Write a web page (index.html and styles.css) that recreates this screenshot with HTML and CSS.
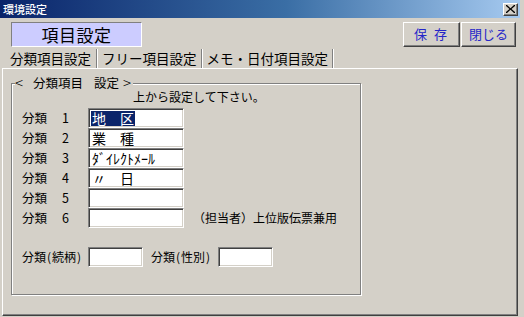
FILE: index.html
```html
<!DOCTYPE html>
<html lang="ja">
<head>
<meta charset="utf-8">
<link rel="stylesheet" href="styles.css">
</head>
<body>
<div class="window">
  <div class="titlebar">
    <span class="title">環境設定</span>
    <span class="close"><svg width="9" height="8" viewBox="0 0 9 8"><path d="M1 0 L4.5 3.2 L8 0 L9 0 L9 1 L5.5 4 L9 7 L9 8 L8 8 L4.5 4.8 L1 8 L0 8 L0 7 L3.5 4 L0 1 L0 0 Z" fill="#000"/></svg></span>
  </div>
  <div class="header">
    <div class="caption">項目設定</div>
    <div class="buttons">
      <div class="btn save">保 存</div>
      <div class="btn close-btn">閉じる</div>
    </div>
  </div>
  <div class="tabs">
    <div class="tab t1">分類項目設定</div><div class="sep"></div>
    <div class="tab t2">フリー項目設定</div><div class="sep"></div>
    <div class="tab t3">メモ・日付項目設定</div><div class="sep"></div>
  </div>
  <div class="panel">
    <div class="group">
      <div class="legend"><span class="lg-a">&lt;</span><span class="lg-b">分類項目</span><span class="lg-c">設定</span><span class="lg-d">&gt;</span></div>
      <div class="note">上から設定して下さい。</div>
      <div class="rows">
        <div class="row"><span class="lbl">分類</span><span class="num">1</span><div class="field wide"><span class="sel">地　区</span></div></div>
        <div class="row"><span class="lbl">分類</span><span class="num">2</span><div class="field wide"><span class="txt">業　種</span></div></div>
        <div class="row"><span class="lbl">分類</span><span class="num">3</span><div class="field wide"><span class="txt">ﾀﾞｲﾚｸﾄﾒｰﾙ</span></div></div>
        <div class="row"><span class="lbl">分類</span><span class="num">4</span><div class="field wide"><span class="txt">〃　日</span></div></div>
        <div class="row"><span class="lbl">分類</span><span class="num">5</span><div class="field wide"></div></div>
        <div class="row"><span class="lbl">分類</span><span class="num">6</span><div class="field wide"></div><span class="hint">（担当者）上位版伝票兼用</span></div>
      </div>
      <div class="extra">
        <span class="elbl">分類<span class="hp">(</span>続柄<span class="hp">)</span></span><div class="field small"></div>
        <span class="elbl second">分類<span class="hp">(</span>性別<span class="hp">)</span></span><div class="field small"></div>
      </div>
    </div>
  </div>
</div>
</body>
</html>
```
FILE: styles.css
```css
* { box-sizing: border-box; }
html, body {
  margin: 0;
  padding: 0;
  background: #d4d0c8;
  font-family: "Noto Sans CJK JP", "Noto Sans", sans-serif;
  color: #000;
}
.window {
  width: 524px;
  height: 317px;
  overflow: hidden;
}
.titlebar {
  width: 520px;
  height: 18px;
  background: linear-gradient(to right, #0a246a 0%, #3a6ea5 55%, #a6caf0 100%);
  display: flex;
  align-items: center;
  justify-content: space-between;
  padding: 0 2px 0 3px;
}
.title {
  color: #fff;
  font-size: 11px;
  line-height: 14px;
  font-weight: 500;
}
.close {
  width: 15px;
  height: 13px;
  background: #d4d0c8;
  border-top: 1px solid #fff;
  border-left: 1px solid #fff;
  border-right: 1px solid #404040;
  border-bottom: 1px solid #404040;
  box-shadow: inset -1px -1px 0 #808080;
  display: flex;
  align-items: center;
  justify-content: center;
}
.header {
  width: 518px;
  margin-top: 4px;
  padding-left: 11px;
  padding-right: 2px;
  display: flex;
  justify-content: space-between;
  height: 25px;
}
.caption {
  width: 131px;
  height: 25px;
  background: #ccccff;
  border-top: 1px solid #808080;
  border-left: 1px solid #808080;
  border-right: 1px solid #fff;
  border-bottom: 1px solid #fff;
  font-size: 17px;
  line-height: 23px;
  text-align: center;
  letter-spacing: 0.5px;
}
.buttons {
  display: flex;
  gap: 1px;
}
.btn {
  height: 25px;
  border-top: 1px solid #fff;
  border-left: 1px solid #fff;
  border-right: 1px solid #404040;
  border-bottom: 1px solid #404040;
  box-shadow: inset -1px -1px 0 #808080;
  color: #2626c8;
  font-size: 13px;
  line-height: 22px;
  text-align: center;
}
.save { width: 57px; letter-spacing: 2px; }
.close-btn { width: 55px; }
.tabs {
  margin-top: 1px;
  height: 20px;
  display: flex;
  align-items: stretch;
  padding-left: 5px;
}
.tab {
  font-size: 13.5px;
  line-height: 20px;
  padding: 0 5px;
}
.t2 { padding: 0 4px 0 4px; }
.t3 { padding: 0 4px 0 4px; }
.sep {
  width: 2px;
  margin: 1px 0 0 0;
  border-left: 1px solid #808080;
  border-right: 1px solid #fff;
}
.panel {
  margin-left: 2px;
  width: 516px;
  height: 248px;
  border-top: 1px solid #fff;
  border-left: 1px solid #fff;
  border-right: 1px solid #404040;
  border-bottom: 1px solid #404040;
  box-shadow: inset -1px -1px 0 #808080;
  padding-left: 8px;
  padding-top: 14px;
}
.group {
  position: relative;
  width: 350px;
  height: 212px;
  border: 1px solid #808080;
  box-shadow: inset 1px 1px 0 #fff, 1px 1px 0 #fff;
}
.legend {
  position: absolute;
  top: -9px;
  left: 3px;
  height: 16px;
  background: #d4d0c8;
  font-size: 12.5px;
  line-height: 16px;
  display: flex;
  align-items: center;
  padding-right: 2px;
}
.lg-a, .lg-d {
  font-size: 15px;
  line-height: 16px;
  font-weight: 300;
}
.lg-a { margin-right: 10px; }
.lg-b { margin-right: 11px; }
.lg-c { margin-right: 4px; }
.note {
  margin-top: 6px;
  margin-left: 121px;
  font-size: 12px;
  line-height: 14px;
}
.rows {
  margin-top: 4px;
}
.row {
  display: flex;
  align-items: center;
  height: 20px;
}
.lbl {
  margin-left: 10px;
  width: 40px;
  font-size: 12.5px;
  line-height: 20px;
}
.num {
  width: 26px;
  font-size: 12.5px;
  line-height: 20px;
}
.field {
  height: 20px;
  background: #fff;
  border-top: 1px solid #808080;
  border-left: 1px solid #808080;
  border-right: 1px solid #fff;
  border-bottom: 1px solid #fff;
  box-shadow: inset 1px 1px 0 #404040, inset -1px -1px 0 #d4d0c8;
  display: flex;
  align-items: center;
  padding-left: 2px;
  font-size: 14px;
}
.wide { width: 96px; }
.small { width: 55px; }
.sel {
  background: #0a246a;
  color: #fff;
  line-height: 15px;
  height: 15px;
  padding-left: 1px;
  padding-right: 1px;
}
.txt {
  padding-left: 1px;
  line-height: 15px;
}
.hint {
  margin-left: 9px;
  font-size: 12px;
  line-height: 20px;
}
.extra {
  margin-top: 19px;
  display: flex;
  align-items: center;
  height: 20px;
}
.elbl {
  margin-left: 10px;
  width: 66px;
  font-size: 12px;
  line-height: 20px;
  white-space: nowrap;
}
.elbl.second {
  margin-left: 8px;
  width: 67px;
}
.hp {
  display: inline-block;
  width: 6px;
  text-align: center;
}
```
